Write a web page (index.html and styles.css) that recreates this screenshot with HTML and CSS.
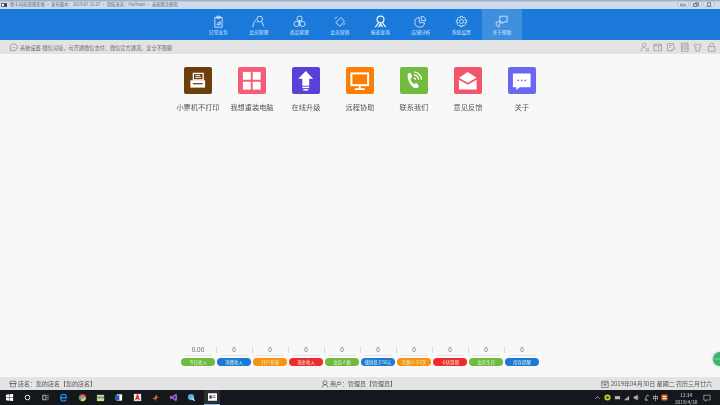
FILE: index.html
```html
<!DOCTYPE html>
<html lang="zh">
<head>
<meta charset="utf-8">
<title>会员管理</title>
<link rel="stylesheet" href="styles.css">
</head>
<body>
<div class="app">
  <header class="titlebar">
    <div class="title-left">
      <svg class="logo" viewBox="0 0 8 5"><rect width="8" height="5" fill="#444"/><rect x="1" y="1" width="3" height="3" fill="#fff"/></svg>
      <span>智卡科技管理系统 · 发布版本：2019.07.15.07 · 登陆来宾：HuiYuan · 未按期注册用</span>
    </div>
    <div class="winbtns">
      <span class="winbtn"><svg viewBox="0 0 8 6"><rect x="1" y="2.500" width="6" height="1.600" fill="none" stroke="#667" stroke-width=".7"/></svg></span>
      <span class="winbtn"><svg viewBox="0 0 8 6"><path d="M1 5V2h4v3zM3 2V1h4v3H5" fill="none" stroke="#445" stroke-width=".8"/></svg></span>
      <span class="winbtn"><svg viewBox="0 0 8 6"><rect x="2" y="1" width="4" height="4" fill="none" stroke="#556" stroke-width=".8"/></svg></span>
    </div>
  </header>

  <nav class="nav">
    <a class="nav-item"><svg viewBox="0 0 16 16"><path d="M3.500 3h9v12h-9zM6 1.500h4v2.500H6zM6 12l2-3 1 1 1-2v4H6z"/></svg><span>日常业务</span></a>
    <a class="nav-item"><svg viewBox="0 0 16 16"><circle cx="9.500" cy="5" r="3.500"/><path d="M7 8.500l-1 1M12 8l2.500 6M1 15c.3-3 1.300-6 3.500-9"/></svg><span>会员管理</span></a>
    <a class="nav-item"><svg viewBox="0 0 16 16"><circle cx="8" cy="4.500" r="3.200"/><circle cx="4.300" cy="11" r="3.200"/><circle cx="11.700" cy="11" r="3.200"/><path d="M8 6v4M6.500 12.500h3"/></svg><span>商品管理</span></a>
    <a class="nav-item"><svg viewBox="0 0 16 16"><path d="M9.500 3l4.500 4.500-5.500 6.500L3.500 9.500zM2 5l3-3M15 10l-2.500 3"/></svg><span>会员营销</span></a>
    <a class="nav-item"><svg viewBox="0 0 16 16"><circle cx="8" cy="5.500" r="4.200" stroke-width="1.600"/><path d="M1.500 15l4-5M14.500 15l-4-5M5.500 15L8 11l2.500 4" stroke-width="1.600"/></svg><span>报表查询</span></a>
    <a class="nav-item"><svg viewBox="0 0 16 16"><path d="M6.500 3a6 6 0 1 0 6.500 6.500H6.500zM9 1.500a5.500 5.500 0 0 1 5.500 5.500H9z"/></svg><span>店铺分析</span></a>
    <a class="nav-item"><svg viewBox="0 0 16 16"><path d="M7 1.500h2l.5 2 1.800-.8 1.800 1.800-.9 1.800 2.300.7v2l-2.300.7.900 1.800-1.800 1.800-1.800-.9L9 14.500H7l-.5-2-1.800.9-1.800-1.800.9-1.800L1.500 9V7l2.300-.7-.9-1.800 1.800-1.800 1.800.8z"/><circle cx="8" cy="8" r="2.500"/></svg><span>系统设置</span></a>
    <a class="nav-item active"><svg viewBox="0 0 16 16"><path d="M6 1.500h9v7h-4l-2 2v-2H6zM1.500 9l3.500-1 2 2-2 1.500v1.500l1 1-2 1-2.500-2.500z"/></svg><span>关于帮助</span></a>
  </nav>

  <div class="notice">
    <div class="notice-left">
      <svg class="notice-icon" viewBox="0 0 10 10"><path d="M5 1a4 3.800 0 1 1-2 7l-1.500.8.400-1.800A4 3.800 0 0 1 5 1z" fill="none" stroke="#777" stroke-width=".7"/><path d="M3 5h.8M4.600 5h.8M6.200 5H7" stroke="#777" stroke-width=".7"/></svg>
      <span>系统设置-微信对接，可开通微信支付、微信官方通道，安全不限额</span>
    </div>
    <div class="tools">
      <svg viewBox="0 0 10 10"><circle cx="4.500" cy="3" r="2"/><path d="M1 9.500c0-3 1.500-4 3.500-4M6 7h3.500M6 9h3.500"/></svg>
      <svg viewBox="0 0 10 10"><path d="M1 2h8v7H1zM1 3.500h8M4.500 5h1.500v2.500"/></svg>
      <svg viewBox="0 0 10 10"><path d="M6 9H1.500V1.500h6.500V5M3 3.500h3.500M3 5.500h2M6 9l.5-1.500L9 5l1 1-2.500 2.500z"/></svg>
      <svg viewBox="0 0 10 10"><path d="M1.500 1h7v8.500h-7zM1.500 3h7M1.500 5h7M1.500 7h7"/></svg>
      <svg viewBox="0 0 10 10"><path d="M3 1.500L.8 3.500 2 5l1-.7v5h4V4.300l1 .7 1.200-1.500L7 1.500C6.500 3 3.500 3 3 1.500z"/></svg>
      <svg viewBox="0 0 10 10"><path d="M1.500 4.500h7v5h-7zM3 4.500V3a2 2 0 0 1 4 0v1.500"/></svg>
    </div>
  </div>

  <main class="content">
    <section class="apps">
      <a class="app-item"><span class="tile t-brown"><svg viewBox="0 0 28 28"><path d="M9.500 6.500h10V13h-10z" fill="none" stroke="#fff" stroke-width="1.300"/><path d="M11.500 8.500h5M11.500 10.500h6" stroke="#fff"/><path d="M6.500 13.500H21.500V21H6.500z" fill="#fff"/><path d="M9 17h10" stroke="#6b3e0b" stroke-width="1.300"/></svg></span><span class="app-label">小票机不打印</span></a>
      <a class="app-item"><span class="tile t-pink"><svg viewBox="0 0 28 28" fill="#fff"><rect x="5" y="5" width="8" height="8"/><rect x="15" y="5" width="8" height="8"/><rect x="5" y="15" width="8" height="8"/><rect x="15" y="15" width="8" height="8"/></svg></span><span class="app-label">我想重装电脑</span></a>
      <a class="app-item"><span class="tile t-purple"><svg viewBox="0 0 28 28" fill="#fff"><path d="M14 4l7.500 8H17.500v7h-7v-7H6.500z"/><rect x="10.500" y="20" width="7" height="1.500"/><rect x="11.500" y="22.500" width="5" height="1.500"/></svg></span><span class="app-label">在线升级</span></a>
      <a class="app-item"><span class="tile t-orange"><svg viewBox="0 0 28 28"><rect x="5.500" y="6.500" width="17" height="12" fill="none" stroke="#fff" stroke-width="2"/><path d="M14 19v3M9 22.500h10" stroke="#fff" stroke-width="1.800"/></svg></span><span class="app-label">远程协助</span></a>
      <a class="app-item"><span class="tile t-green"><svg viewBox="0 0 28 28"><path d="M8 6.500l3 -.5 1.500 4.500-2 1.500c.5 2 2 4.500 4 5.500l2-1.500 3 3.500-2 2c-5 1-11-8-9.500-15z" fill="#fff"/><path d="M14 8a5.500 5.500 0 0 1 5 5M14.500 5a8.500 8.500 0 0 1 7.500 8M14 11a2.500 2.500 0 0 1 2 2" fill="none" stroke="#fff" stroke-width="1.200"/></svg></span><span class="app-label">联系我们</span></a>
      <a class="app-item"><span class="tile t-rose"><svg viewBox="0 0 28 28" fill="#fff"><path d="M14 5l9 6-9 5-9-5z"/><path d="M5 13l9 5 9-5v10H5z"/></svg></span><span class="app-label">意见反馈</span></a>
      <a class="app-item"><span class="tile t-indigo"><svg viewBox="0 0 28 28"><path d="M5 6.500h18v14H12l-3.500 3v-3H5z" fill="#fff"/><circle cx="10.500" cy="13.500" r=".9" fill="#6a67f0"/><circle cx="14" cy="13.500" r=".9" fill="#6a67f0"/><circle cx="17.500" cy="13.500" r=".9" fill="#6a67f0"/></svg></span><span class="app-label">关于</span></a>
    </section>

    <section class="stats">
      <div class="stat"><span class="stat-value">0.00</span><span class="pill p-green">今日收入</span></div>
      <div class="stat"><span class="stat-value">0</span><span class="pill p-blue">消费收入</span></div>
      <div class="stat"><span class="stat-value">0</span><span class="pill p-orange">开户充值</span></div>
      <div class="stat"><span class="stat-value">0</span><span class="pill p-red">现金收入</span></div>
      <div class="stat"><span class="stat-value">0</span><span class="pill p-green">会员人数</span></div>
      <div class="stat"><span class="stat-value">0</span><span class="pill p-blue">储值低于50元</span></div>
      <div class="stat"><span class="stat-value">0</span><span class="pill p-orange">次数少于3次</span></div>
      <div class="stat"><span class="stat-value">0</span><span class="pill p-red">卡快到期</span></div>
      <div class="stat"><span class="stat-value">0</span><span class="pill p-green">会员生日</span></div>
      <div class="stat"><span class="stat-value">0</span><span class="pill p-blue">库存提醒</span></div>
    </section>
    <span class="side-ball"><svg viewBox="0 0 7 14"><path d="M1.500 7h1M3.500 7h1M5.500 7h1" stroke="#fff" stroke-width=".8"/></svg></span>
  </main>

  <footer class="status">
    <div class="status-cell">
      <svg viewBox="0 0 10 10"><path d="M1.500 1.500h7v3h-7zM2 4.500v4h6v-4M.5 4.500h9" fill="none" stroke="#555" stroke-width=".8"/></svg>
      <span>店名：您的店名【您的店名】</span>
    </div>
    <div class="status-cell status-user">
      <svg viewBox="0 0 10 10"><circle cx="5" cy="3.500" r="2.500" fill="none" stroke="#555" stroke-width=".9"/><path d="M1.500 9.500c0-2.500 1.500-3.500 3.500-3.500s3.500 1 3.500 3.500" fill="none" stroke="#555" stroke-width=".9"/></svg>
      <span>用户：管理员【管理员】</span>
    </div>
    <div class="status-cell status-date">
      <svg viewBox="0 0 10 10"><path d="M1 1.500h8v8H1zM1 3.500h8M3.500 5.500h3L5 7.500z" fill="none" stroke="#555" stroke-width=".8"/></svg>
      <span>2019年04月30日 星期二 农历三月廿六</span>
    </div>
  </footer>

  <div class="taskbar">
    <div class="task-left">
      <svg class="task-ico" viewBox="0 0 10 10" fill="#fff"><path d="M1 2l3.500-.5v3.200H1zM5 1.400L9 1v3.700H5zM1 5.300h3.500v3.200L1 8zM5 5.300h4V9l-4-.5z"/></svg>
      <svg class="task-ico" viewBox="0 0 10 10"><circle cx="5" cy="5" r="2.600" fill="none" stroke="#fff" stroke-width="1"/></svg>
      <svg class="task-ico" viewBox="0 0 10 10"><path d="M2 2.500h3.500v5H2zM7 2.500h1.500M7 5h1.500M7 7.500h1.500" fill="none" stroke="#ddd" stroke-width=".9"/></svg>
      <svg class="task-ico" viewBox="0 0 10 10"><path d="M1.800 5.300h6.400C8.200 2.800 7 1.500 5 1.500S1.800 3 1.800 5.300 3 9 5 9c1.400 0 2.400-.6 3-1.700" fill="none" stroke="#1e88e5" stroke-width="1.500"/></svg>
      <svg class="task-ico" viewBox="0 0 10 10"><circle cx="5" cy="5" r="4" fill="#e33c2f"/><path d="M5 5L9 5A4 4 0 0 1 3 8.500z" fill="#f8c52d"/><path d="M5 5L3 8.500A4 4 0 0 1 1.500 3z" fill="#35a853"/><circle cx="5" cy="5" r="1.700" fill="#4285f4" stroke="#fff" stroke-width=".5"/></svg>
      <svg class="task-ico" viewBox="0 0 10 10"><path d="M1 2h8v7H1z" fill="#f0d36a"/><path d="M1 4h8v2H1z" fill="#3aa0d8"/></svg>
      <svg class="task-ico" viewBox="0 0 10 10"><path d="M3 1.500h6v7H3z" fill="#fff"/><path d="M1 2.500h5v5.500H1z" fill="#2a5cae"/></svg>
      <svg class="task-ico" viewBox="0 0 10 10"><path d="M1 1h8v8H1z" fill="#eee"/><path d="M3 8l2-6 2 6M3.800 6h2.400" fill="none" stroke="#d52a2a" stroke-width="1.400"/></svg>
      <svg class="task-ico" viewBox="0 0 10 10"><path d="M6 1L4 5 1 6l3 .5L5 9l1.500-3.500L9 5 6.500 4z" fill="#e8642a"/><path d="M1 6l3 .5L5 9 3.500 6z" fill="#2b7bd6"/></svg>
      <svg class="task-ico" viewBox="0 0 10 10"><path d="M7 1l2 1v6L7 9 3.500 6 2 7.200 1 6.500V3.500L2 2.800 3.500 4zM7 3.200L5 5l2 1.800z" fill="#9b5fd0"/></svg>
      <svg class="task-ico" viewBox="0 0 10 10"><circle cx="4.500" cy="4.500" r="3.500" fill="#5fa8dc"/><path d="M5 5l3.500 3.500" stroke="#cfe4f2" stroke-width="1.500"/></svg>
      <span class="task-app"><svg viewBox="0 0 12 10"><rect width="12" height="10" fill="#fff"/><rect x="2" y="3" width="3" height="4" fill="#333"/><rect x="6" y="3" width="4" height="1" fill="#555"/><rect x="6" y="5" width="4" height="1" fill="#555"/></svg></span>
    </div>
    <div class="tray">
      <svg viewBox="0 0 8 8"><path d="M1.500 5.500L4 3l2.500 2.500" fill="none" stroke="#ccc" stroke-width=".8"/></svg>
      <svg viewBox="0 0 8 8"><circle cx="4" cy="4" r="3.500" fill="#c6d61f"/><circle cx="4" cy="4" r="1.500" fill="#333"/></svg>
      <svg viewBox="0 0 8 8"><path d="M1 2.500h6v3.500H1z" fill="#bbb"/></svg>
      <svg viewBox="0 0 8 8"><path d="M1 7l6-5v5z" fill="#aaa"/></svg>
      <svg viewBox="0 0 8 8"><path d="M1 3h1.500L5 1v6L2.500 5H1zM6 2.500v3" stroke="#bbb" stroke-width=".5" fill="#bbb"/></svg>
      <svg viewBox="0 0 8 8"><path d="M5 1L2 6.500 M3 7a1 1 0 1 0 0-.1M5 1l2 1.500" stroke="#ccc" stroke-width=".8" fill="none"/></svg>
      <span class="tray-lang">中</span>
      <svg viewBox="0 0 8 8"><rect x=".5" y=".5" width="7" height="7" rx="1.500" fill="#e8622c"/><path d="M2 3h4M2 5h4" stroke="#fff"/></svg>
      <span class="clock"><span>12:34</span><span>2019/4/30</span></span>
      <svg class="tray-msg" viewBox="0 0 10 10"><path d="M1 1.500h8v6H4.500L3 9V7.500H1z" fill="none" stroke="#ddd" stroke-width=".7"/></svg>
    </div>
  </div>
</div>
</body>
</html>
```
FILE: styles.css
```css
* { box-sizing: border-box; }
html, body { margin: 0; padding: 0; }
body {
  width: 720px;
  height: 405px;
  overflow: hidden;
  font-family: "Noto Sans CJK SC", "Liberation Sans", sans-serif;
  background: #f8f8f8;
}
.app {
  display: flex;
  flex-direction: column;
  width: 720px;
  height: 405px;
  filter: blur(0.3px);
}
svg { display: block; }

.titlebar {
  height: 9px;
  flex: none;
  display: flex;
  justify-content: space-between;
  background: linear-gradient(#98a4b4 0, #cfdcee 25%, #c9daf0 100%);
  font-size: 4.350px;
  line-height: 9px;
  color: #5f6b7a;
}
.title-left { display: flex; align-items: center; gap: 3px; padding-left: 1px; }
.logo { width: 6px; height: 4px; }
.winbtns { display: flex; padding: 1px 5px 1px 0; gap: 1px; }
.winbtn {
  width: 12px;
  height: 6px;
  border: 1px solid #b9c5d6;
  border-radius: 2px;
  background: #d6e0ee;
}
.winbtn svg { width: 8px; height: 5px; margin: -0.500px auto 0; }

.nav {
  height: 31px;
  flex: none;
  display: flex;
  justify-content: center;
  background: #1a79d9;
}
.nav-item {
  width: 40.500px;
  display: flex;
  flex-direction: column;
  align-items: center;
  padding-top: 6px;
  color: #dcebfb;
  font-size: 4.800px;
  line-height: 6px;
}
.nav-item svg {
  width: 13px;
  height: 13px;
  fill: none;
  stroke: #e8f2fc;
  stroke-width: 1;
  margin-bottom: 1px;
}
.nav-item.active { background: #3f8fdf; }

.notice {
  height: 14px;
  flex: none;
  display: flex;
  align-items: center;
  justify-content: space-between;
  padding: 0 4px 0 9px;
  background: #e3e3e3;
  font-size: 5.200px;
  color: #666;
}
.notice-left { display: flex; align-items: center; gap: 2px; }
.notice-icon { width: 9px; height: 9px; }
.tools { display: flex; gap: 3.900px; }
.tools svg {
  width: 9.500px;
  height: 10px;
  fill: none;
  stroke: #8e8e8e;
  stroke-width: 0.700;
}

.content {
  flex: 1;
  position: relative;
  display: flex;
  flex-direction: column;
  background: #f8f8f8;
}
.apps {
  display: flex;
  justify-content: center;
  padding-top: 12.700px;
}
.app-item {
  width: 54px;
  display: flex;
  flex-direction: column;
  align-items: center;
  color: #555;
  font-size: 7.200px;
  line-height: 10px;
}
.tile { width: 27.500px; height: 27.500px; border-radius: 2px; margin-bottom: 7.500px; }
.tile svg { width: 100%; height: 100%; }
.app-label { white-space: nowrap; }
.t-brown { background: #6b3e0b; }
.t-pink { background: #f55d78; }
.t-purple { background: #5b3fd9; }
.t-orange { background: #f97f05; }
.t-green { background: #72bb3f; }
.t-rose { background: #f2566b; }
.t-indigo { background: #6a67f0; }

.stats {
  margin-top: auto;
  display: flex;
  justify-content: center;
  padding-bottom: 11px;
}
.stat {
  width: 36px;
  display: flex;
  flex-direction: column;
  align-items: center;
  position: relative;
}
.stat-value {
  width: 27px;
  text-align: center;
  font-size: 6.500px;
  line-height: 10px;
  height: 12px;
  color: #666;
  border-bottom: 1px solid #e2e2e2;
  margin-bottom: 2px;
}
.stat + .stat::before {
  content: "";
  position: absolute;
  left: 0;
  top: 3px;
  height: 6px;
  border-left: 1px solid #d8d8d8;
}
.pill {
  width: 33.500px;
  height: 8px;
  border-radius: 4px;
  font-size: 4.400px;
  line-height: 8px;
  text-align: center;
  color: #e8f4e0;
  white-space: nowrap;
  overflow: hidden;
}
.p-green { background: #6fba3e; }
.p-blue { background: #1b7ad6; }
.p-orange { background: #f7930e; }
.p-red { background: #ee2a2e; }

.side-ball {
  position: absolute;
  right: 0;
  top: 298px;
  width: 7px;
  height: 14px;
  border-radius: 7px 0 0 7px;
  background: #3bb56a;
  box-shadow: 0 0 3px rgba(80, 160, 110, 0.700);
}
.side-ball svg { width: 7px; height: 14px; }

.status {
  height: 13px;
  flex: none;
  display: grid;
  grid-template-columns: 1fr auto 1fr;
  align-items: center;
  padding: 0 8px 0 9px;
  background: #e4e4e4;
  font-size: 6px;
  color: #555;
}
.status-cell { display: flex; align-items: center; gap: 1px; }
.status-cell svg { width: 8px; height: 8px; }
.status-user { margin-right: 4px; }
.status-date { justify-content: flex-end; gap: 2px; }

.taskbar {
  height: 15px;
  flex: none;
  display: flex;
  justify-content: space-between;
  align-items: center;
  background: #14181c;
  color: #ddd;
}
.task-left { display: flex; align-items: center; padding-left: 4.500px; }
.task-ico { width: 9px; height: 9px; margin-right: 9.300px; }
.task-app {
  width: 16px;
  height: 15px;
  margin-left: -1.500px;
  display: flex;
  align-items: center;
  justify-content: center;
  border-bottom: 1px solid #8ab4dc;
  background: #2a2e33;
}
.task-app svg { width: 9px; height: 8px; }
.tray { display: flex; align-items: center; gap: 2.700px; padding-right: 9px; font-size: 5px; }
.tray svg { width: 7px; height: 7px; }
.tray .tray-msg { width: 8px; height: 8px; margin-left: 3px; }
.tray-lang { font-size: 6px; line-height: 7px; }
.clock {
  display: flex;
  flex-direction: column;
  align-items: center;
  font-size: 4.800px;
  line-height: 7px;
  margin-left: 4px;
}
```
